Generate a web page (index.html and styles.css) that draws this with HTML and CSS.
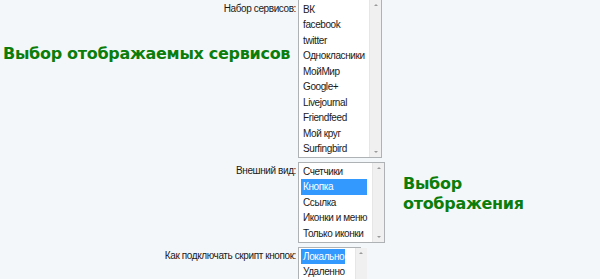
FILE: index.html
```html
<!DOCTYPE html>
<html lang="ru">
<head>
<meta charset="utf-8">
<title>Настройки кнопок</title>
<link rel="stylesheet" href="styles.css">
</head>
<body>
<div class="form">
  <div class="row row-services">
    <div class="lab">
      <span class="label">Набор сервисов:</span>
      <h2 class="note note-left">Выбор отображаемых сервисов</h2>
    </div>
    <div class="listbox lb-services">
      <ul class="opts">
        <li>ВК</li>
        <li>facebook</li>
        <li>twitter</li>
        <li>Однокласники</li>
        <li>МойМир</li>
        <li>Google+</li>
        <li>Livejournal</li>
        <li>Friendfeed</li>
        <li>Мой круг</li>
        <li>Surfingbird</li>
      </ul>
      <div class="sb"><span class="arr up"></span><span class="arr down"></span></div>
    </div>
  </div>

  <div class="row row-view">
    <div class="lab">
      <span class="label">Внешний вид:</span>
    </div>
    <div class="listbox lb-view">
      <ul class="opts">
        <li>Счетчики</li>
        <li class="sel">Кнопка</li>
        <li>Ссылка</li>
        <li>Иконки и меню</li>
        <li>Только иконки</li>
      </ul>
      <div class="sb"><span class="arr up"></span><span class="arr down"></span></div>
    </div>
    <h2 class="note note-right">Выбор<br>отображения</h2>
  </div>

  <div class="row row-script">
    <div class="lab">
      <span class="label label-script">Как подключать скрипт кнопок:</span>
    </div>
    <div class="listbox lb-script">
      <ul class="opts">
        <li class="sel">Локально</li>
        <li>Удаленно</li>
      </ul>
      <div class="sb"><span class="arr up"></span><span class="arr down"></span></div>
    </div>
  </div>
</div>
</body>
</html>
```

FILE: styles.css
```css
html, body {
  margin: 0;
  padding: 0;
  background: #f4f7f9;
  height: 100%;
  overflow: hidden;
}

.form {
  display: flex;
  flex-direction: column;
  gap: 4px;
  margin-top: -1px;
  font-family: "Liberation Sans", Arial, sans-serif;
  font-size: 10px;
  letter-spacing: -0.4px;
  color: #1a1a1a;
}

.row {
  display: flex;
  align-items: flex-start;
}

.lab {
  width: 296px;
  flex: none;
  display: flex;
  flex-direction: column;
  padding-right: 2px;
}

.label {
  align-self: flex-end;
  line-height: 12px;
  margin-top: 4px;
}

.label-script {
  margin-top: 3px;
}

.row-view .label {
  margin-top: 3px;
}

.note {
  margin: 0;
  font-family: "DejaVu Sans", sans-serif;
  font-weight: bold;
  font-size: 16px;
  line-height: 20px;
  color: #0b7d0b;
  letter-spacing: -0.3px;
  white-space: nowrap;
}

.note-left {
  margin-top: 29px;
  padding-left: 3px;
}

.note-right {
  margin-left: 18px;
  margin-top: 12px;
}

.listbox {
  flex: none;
  display: flex;
  background: #fff;
  border: 1px solid #aeb2b5;
  box-sizing: border-box;
}

.opts {
  list-style: none;
  margin: 0;
  padding: 1px 0 1px 2px;
  flex: 1;
}

.opts li {
  height: 15.45px;
  line-height: 15px;
  padding-left: 2px;
  white-space: nowrap;
}

.opts li.sel {
  background: #3399ff;
  color: #fff;
}

.lb-services {
  width: 84px;
  height: 159px;
}

.lb-services .opts {
  padding-top: 2px;
  padding-right: 4px;
}

.lb-view {
  width: 87px;
  height: 81px;
}

.lb-view .opts {
  padding-right: 5px;
}

.lb-script {
  width: 63px;
  height: 40px;
}

.lb-script .opts {
  padding-right: 10px;
}

.sb {
  width: 11px;
  flex: none;
  background: #f0f0f0;
  border-left: 1px solid #e6e6e6;
  display: flex;
  flex-direction: column;
  justify-content: space-between;
  align-items: center;
  padding: 4px 0;
}

.arr {
  width: 0;
  height: 0;
  border-left: 2px solid transparent;
  border-right: 2px solid transparent;
}

.arr.up {
  border-bottom: 2px solid #9a9a9a;
}

.arr.down {
  border-top: 2px solid #9a9a9a;
}
```
